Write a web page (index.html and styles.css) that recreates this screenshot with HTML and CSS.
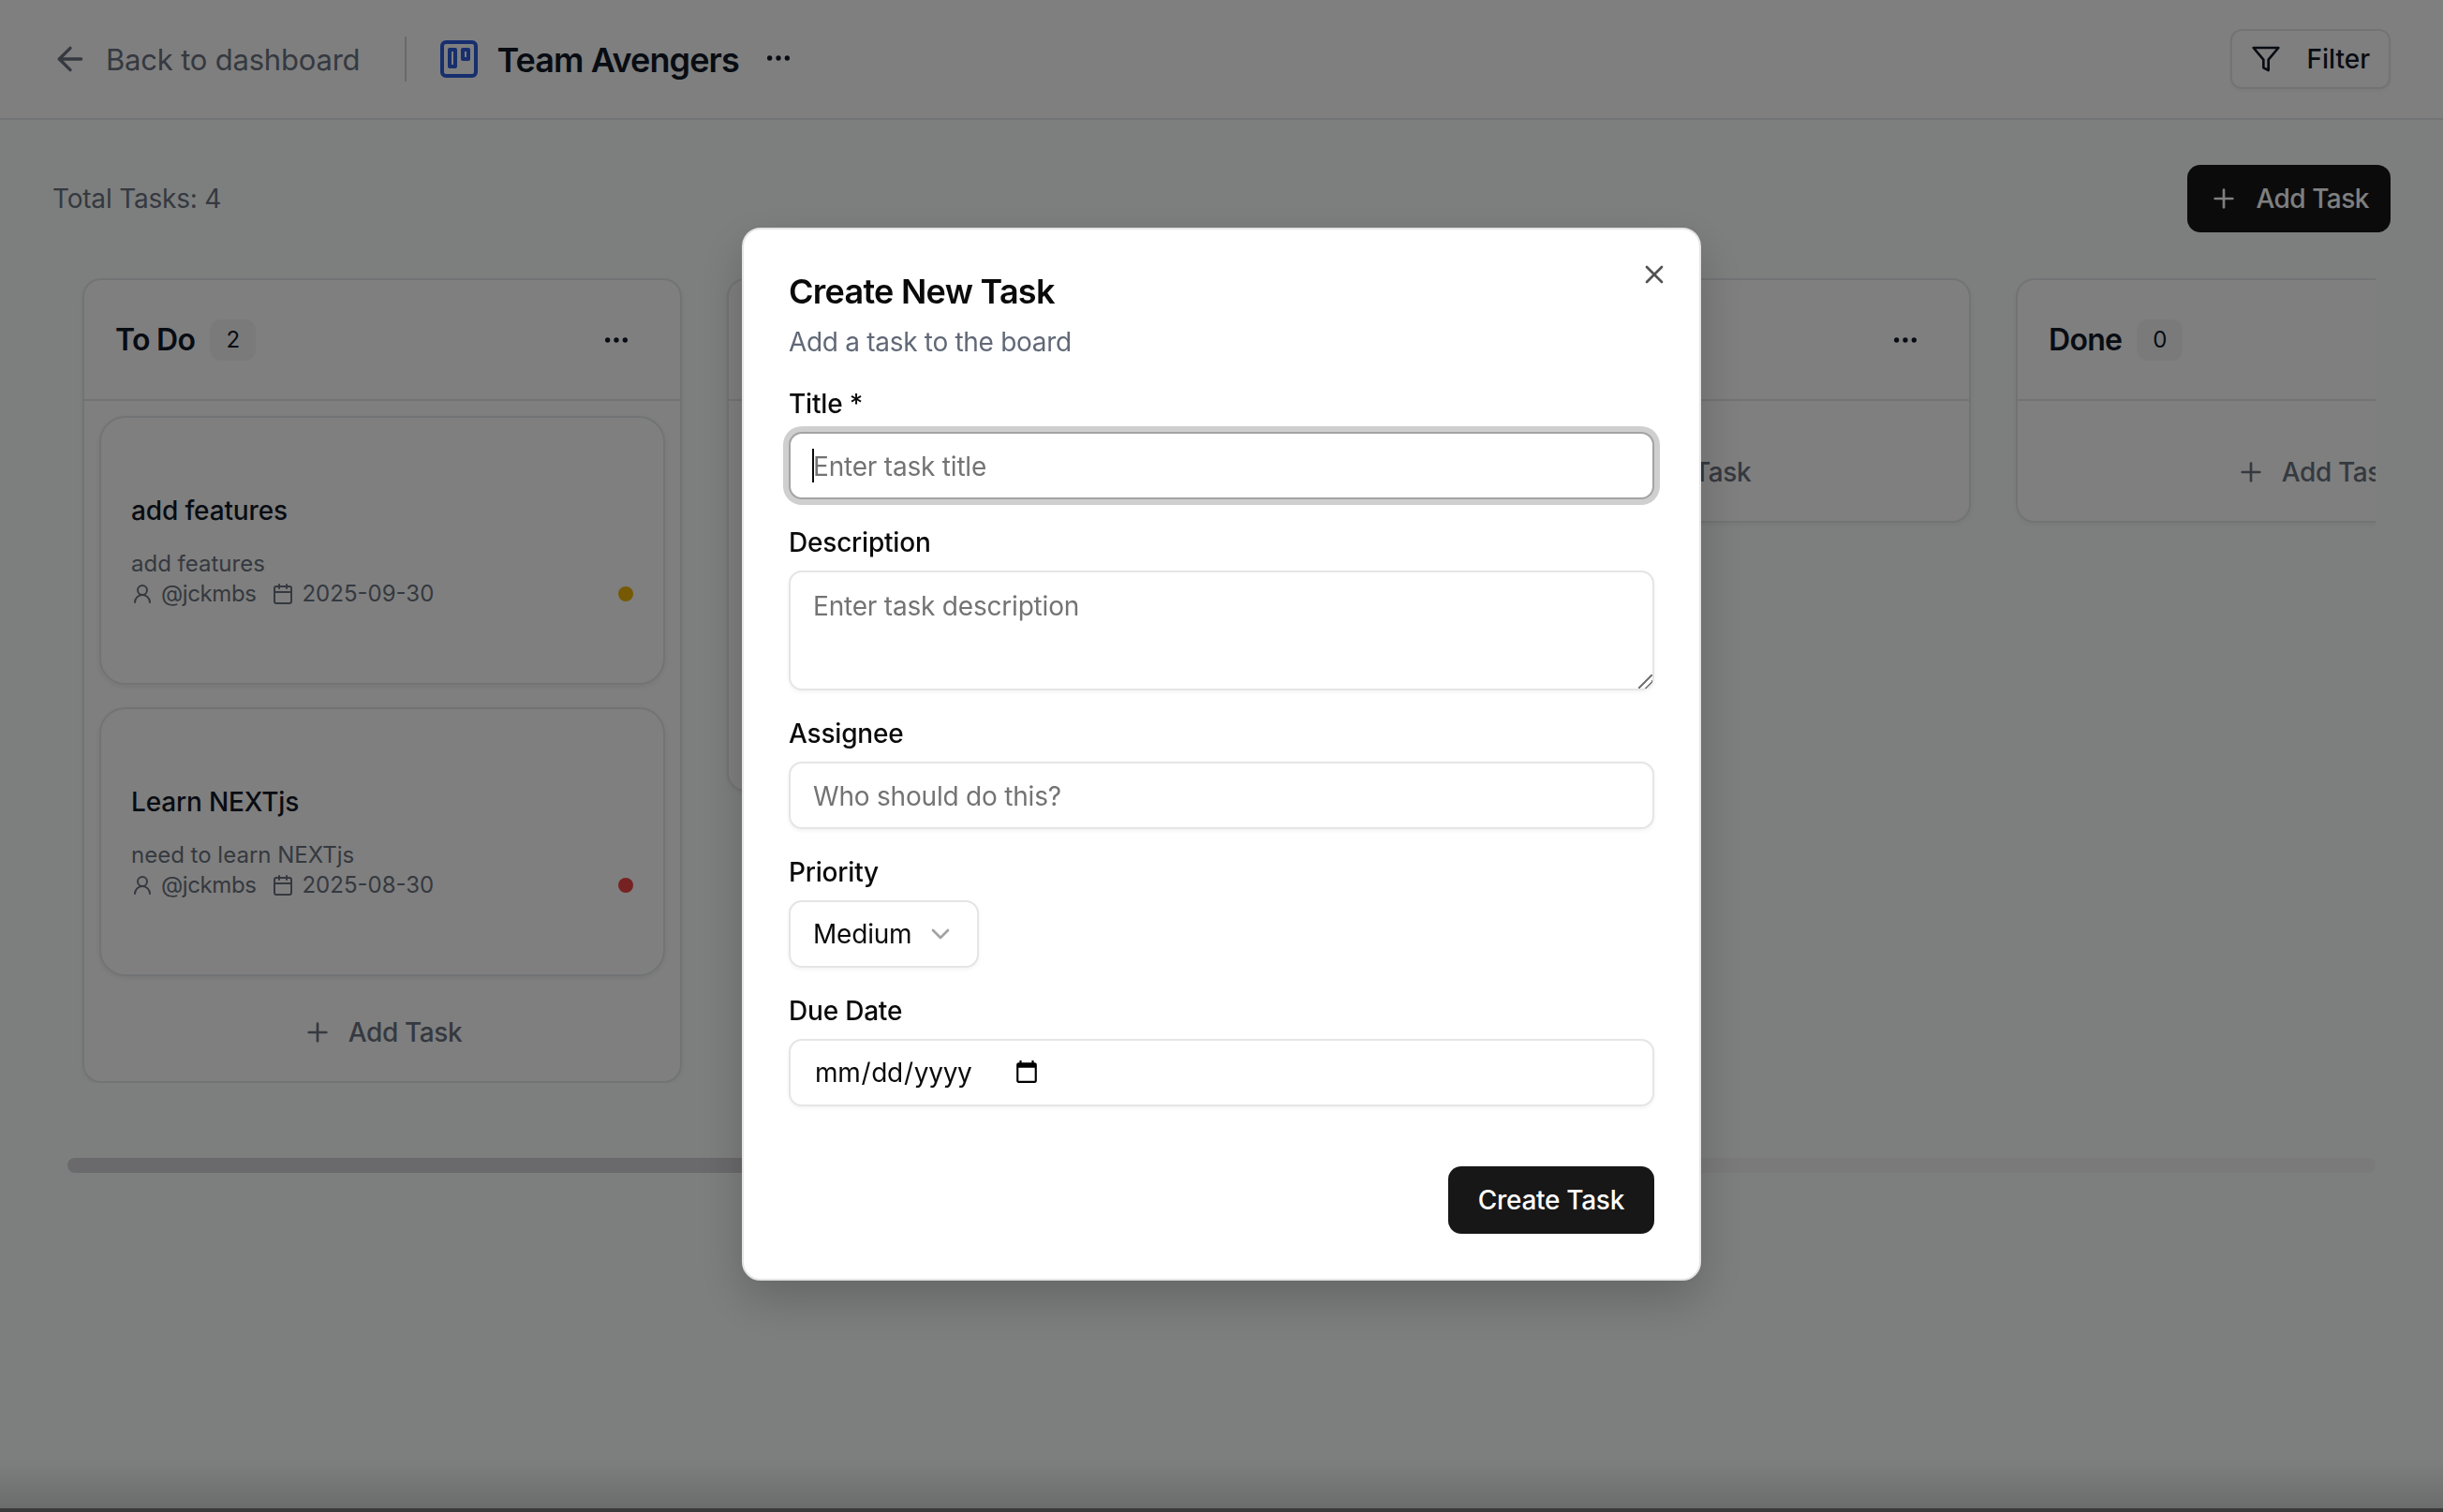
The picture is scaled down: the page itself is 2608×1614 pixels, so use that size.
FILE: index.html
```html
<!DOCTYPE html>
<html lang="en">
<head>
    <meta charset="UTF-8">
    <meta name="viewport" content="width=device-width, initial-scale=1.0">
    <title>Team Avengers</title>
    <link rel="stylesheet" href="styles.css">
</head>
<body>
    <header class="topbar">
        <div class="topbar-left">
            <a class="back-link" href="#">
                <svg class="icon icon-back" viewBox="0 0 24 24"><path d="m12 19-7-7 7-7"/><path d="M19 12H5"/></svg>
                Back to dashboard
            </a>
            <span class="divider"></span>
            <svg class="board-icon" viewBox="0 0 24 24"><rect x="3" y="3" width="18" height="18" rx="2"/><rect x="7" y="7" width="3" height="9"/><rect x="14" y="7" width="3" height="5"/></svg>
            <h1 class="board-name">Team Avengers</h1>
            <svg class="icon dots" viewBox="0 0 24 24"><circle cx="12" cy="12" r="1"/><circle cx="19" cy="12" r="1"/><circle cx="5" cy="12" r="1"/></svg>
        </div>
        <button class="btn-filter">
            <svg class="icon" viewBox="0 0 24 24"><path d="M22 3H2l8 9.46V19l4 2v-8.54L22 3z"/></svg>
            Filter
        </button>
    </header>

    <main class="content">
        <div class="toolbar">
            <span class="total">Total Tasks: 4</span>
            <button class="btn-dark btn-add">
                <svg class="icon" viewBox="0 0 24 24"><path d="M5 12h14"/><path d="M12 5v14"/></svg>
                Add Task
            </button>
        </div>

        <div class="board">
            <section class="column">
                <div class="column-head">
                    <h2>To Do</h2>
                    <span class="count">2</span>
                    <svg class="icon dots" viewBox="0 0 24 24"><circle cx="12" cy="12" r="1"/><circle cx="19" cy="12" r="1"/><circle cx="5" cy="12" r="1"/></svg>
                </div>
                <div class="column-body">
                    <article class="card">
                        <h3>add features</h3>
                        <p>add features</p>
                        <div class="meta">
                            <svg class="icon" viewBox="0 0 24 24"><circle cx="12" cy="8" r="5"/><path d="M20 21a8 8 0 0 0-16 0"/></svg>
                            <span class="who">@jckmbs</span>
                            <svg class="icon" viewBox="0 0 24 24"><path d="M8 2v4"/><path d="M16 2v4"/><rect x="3" y="4" width="18" height="18" rx="2"/><path d="M3 10h18"/></svg>
                            <span>2025-09-30</span>
                            <i class="dot dot-medium"></i>
                        </div>
                    </article>
                    <article class="card">
                        <h3>Learn NEXTjs</h3>
                        <p>need to learn NEXTjs</p>
                        <div class="meta">
                            <svg class="icon" viewBox="0 0 24 24"><circle cx="12" cy="8" r="5"/><path d="M20 21a8 8 0 0 0-16 0"/></svg>
                            <span class="who">@jckmbs</span>
                            <svg class="icon" viewBox="0 0 24 24"><path d="M8 2v4"/><path d="M16 2v4"/><rect x="3" y="4" width="18" height="18" rx="2"/><path d="M3 10h18"/></svg>
                            <span>2025-08-30</span>
                            <i class="dot dot-high"></i>
                        </div>
                    </article>
                    <button class="btn-ghost">
                        <svg class="icon" viewBox="0 0 24 24"><path d="M5 12h14"/><path d="M12 5v14"/></svg>
                        Add Task
                    </button>
                </div>
            </section>

            <section class="column">
                <div class="column-head">
                    <span class="count count-blank"></span>
                    <svg class="icon dots" viewBox="0 0 24 24"><circle cx="12" cy="12" r="1"/><circle cx="19" cy="12" r="1"/><circle cx="5" cy="12" r="1"/></svg>
                </div>
                <div class="column-body">
                    <article class="card card-blank"></article>
                    <button class="btn-ghost">
                        <svg class="icon" viewBox="0 0 24 24"><path d="M5 12h14"/><path d="M12 5v14"/></svg>
                    </button>
                </div>
            </section>

            <section class="column">
                <div class="column-head">
                    <span class="count count-blank"></span>
                    <svg class="icon dots" viewBox="0 0 24 24"><circle cx="12" cy="12" r="1"/><circle cx="19" cy="12" r="1"/><circle cx="5" cy="12" r="1"/></svg>
                </div>
                <div class="column-body">
                    <button class="btn-ghost">
                        <svg class="icon" viewBox="0 0 24 24"><path d="M5 12h14"/><path d="M12 5v14"/></svg>
                        Add Task
                    </button>
                </div>
            </section>

            <section class="column">
                <div class="column-head">
                    <h2>Done</h2>
                    <span class="count">0</span>
                    <svg class="icon dots" viewBox="0 0 24 24"><circle cx="12" cy="12" r="1"/><circle cx="19" cy="12" r="1"/><circle cx="5" cy="12" r="1"/></svg>
                </div>
                <div class="column-body">
                    <button class="btn-ghost">
                        <svg class="icon" viewBox="0 0 24 24"><path d="M5 12h14"/><path d="M12 5v14"/></svg>
                        Add Task
                    </button>
                </div>
            </section>
        </div>

        <div class="scroll-track"><div class="scroll-thumb"></div></div>
    </main>

    <div class="overlay">
        <div class="window-edge"></div>
        <form class="modal">
            <svg class="icon modal-close" viewBox="0 0 24 24"><path d="M18 6 6 18"/><path d="m6 6 12 12"/></svg>
            <div class="modal-head">
                <h2>Create New Task</h2>
                <p>Add a task to the board</p>
            </div>
            <div class="field">
                <label>Title *</label>
                <div class="caret-wrap">
                    <input class="input input-text input-focus" type="text" placeholder="Enter task title">
                    <span class="caret"></span>
                </div>
            </div>
            <div class="field">
                <label>Description</label>
                <textarea class="input textarea" placeholder="Enter task description"></textarea>
            </div>
            <div class="field">
                <label>Assignee</label>
                <input class="input input-text" type="text" placeholder="Who should do this?">
            </div>
            <div class="field">
                <label>Priority</label>
                <button type="button" class="input select">
                    Medium
                    <svg class="icon" viewBox="0 0 24 24"><path d="m6 9 6 6 6-6"/></svg>
                </button>
            </div>
            <div class="field">
                <label>Due Date</label>
                <input class="input date" type="date">
            </div>
            <div class="modal-foot">
                <button type="button" class="btn-dark btn-create">Create Task</button>
            </div>
        </form>
    </div>
</body>
</html>
```

FILE: styles.css
```css
* { box-sizing: border-box; }
html, body { height: 100%; }
body { margin: 0; background: #fbfefd; color: #111827; font-family: Inter, "Liberation Sans", sans-serif; font-size: 28px; overflow: hidden; }
h1, h2, h3, p { margin: 0; }
button { font: inherit; cursor: pointer; }

.icon { width: 32px; height: 32px; flex: none; fill: none; stroke: currentColor; stroke-width: 2; stroke-linecap: round; stroke-linejoin: round; }
.dots { fill: currentColor; }

/* top bar */
.topbar { height: 128px; padding: 0 56px 0 55px; display: flex; align-items: center; justify-content: space-between; background: #fff; border-bottom: 2px solid #e5e7eb; }
.topbar-left { display: flex; align-items: center; }
.back-link { display: flex; align-items: center; gap: 18px; color: #6b7280; text-decoration: none; font-size: 31px; letter-spacing: -.2px; }
.icon-back { width: 40px; height: 40px; }
.divider { width: 2px; height: 48px; margin: 0 32px 0 48px; background: #d1d5db; }
.board-icon { width: 48px; height: 48px; flex: none; fill: none; stroke: #2f5fdc; stroke-width: 2; stroke-linejoin: round; }
.board-name { margin: 2px 26px 0 16px; font-size: 36px; font-weight: 600; letter-spacing: -.9px; }
.topbar-left .dots { margin-top: -2px; }
.btn-filter { height: 64px; padding: 0 20px; display: flex; align-items: center; gap: 27px; color: #111827; background: #fff; border: 2px solid #e5e7eb; border-radius: 12px; font-weight: 500; box-shadow: 0 2px 4px rgba(0,0,0,.05); }

/* board */
.content { padding: 48px 0 0 72px; }
.toolbar { display: flex; align-items: center; justify-content: space-between; height: 72px; margin: 0 56px 0 -16px; }
.total { color: #6b7280; letter-spacing: -.2px; }
.btn-dark { height: 72px; display: flex; align-items: center; background: #171717; color: #fff; border: 0; border-radius: 14px; font-weight: 500; letter-spacing: -.5px; }
.btn-add { padding: 0 23px; gap: 18px; }

.board { width: 2464px; margin-top: 49px; padding: 0 16px; display: flex; align-items: flex-start; gap: 48px; overflow: hidden; }
.column { flex: 0 0 640px; background: #fff; border: 2px solid #e5e7eb; border-radius: 20px; box-shadow: 0 2px 6px rgba(0,0,0,.06); }
.column-head { height: 129px; padding: 0 52px 0 33px; display: flex; align-items: center; gap: 16px; border-bottom: 2px solid #e5e7eb; }
.column-head h2 { font-size: 32px; font-weight: 600; letter-spacing: -.7px; }
.column-head .dots { margin-left: auto; }
.count { width: 49px; height: 44px; display: flex; align-items: center; justify-content: center; background: #f4f4f5; border-radius: 12px; font-size: 24px; }
.column-body { padding: 16px; display: flex; flex-direction: column; }

.card { height: 287px; margin-bottom: 24px; padding: 75px 32px 0; background: #fff; border: 2px solid #e5e7eb; border-radius: 28px; box-shadow: 0 2px 6px rgba(0,0,0,.08); }
.card:last-of-type { margin-bottom: 0; }
.card h3 { font-size: 28px; line-height: 48px; font-weight: 500; letter-spacing: -.15px; }
.card p { margin-top: 17px; font-size: 24px; line-height: 32px; color: #6b7280; }
.meta { display: flex; align-items: center; font-size: 24px; line-height: 32px; color: #6b7280; }
.meta .icon { width: 24px; height: 24px; margin-right: 8px; }
.who { margin-right: 17px; letter-spacing: -.4px; }
.dot { width: 16px; height: 16px; margin-left: auto; border-radius: 50%; }
.dot-medium { background: #eab308; }
.dot-high { background: #ef4444; }

.btn-ghost { height: 72px; margin-top: 24px; display: flex; align-items: center; justify-content: center; gap: 17px; background: none; border: 0; color: #6b7280; font-weight: 500; letter-spacing: -.4px; }

.scroll-track { width: 2464px; height: 16px; margin-top: 80px; background: #f4f4f5; border-radius: 8px; }
.scroll-thumb { width: 1500px; height: 100%; background: #d4d4d8; border-radius: 8px; }

/* modal */
.overlay { position: fixed; inset: 0; display: flex; align-items: center; justify-content: center; padding-bottom: 5px; background: rgba(0,0,0,.5); }
.window-edge { position: absolute; left: 0; right: 0; bottom: 0; height: 54px; background: linear-gradient(rgba(0,0,0,0), rgba(0,0,0,.14) 92%, #3a3a3a 92%); }
.modal { position: relative; width: 1024px; padding: 48px; display: flex; flex-direction: column; gap: 32px; background: #fff; border: 2px solid #e5e5e5; border-radius: 20px; box-shadow: 0 20px 50px rgba(0,0,0,.2); }
.modal-close { position: absolute; top: 32px; right: 32px; color: #525252; }
.modal-head h2 { font-size: 36px; line-height: 36px; font-weight: 600; color: #0a0a0a; letter-spacing: -.72px; }
.modal-head p { margin-top: 16px; line-height: 40px; color: #616877; letter-spacing: -.3px; }
.field { display: flex; flex-direction: column; gap: 16px; align-items: flex-start; }
.field label { line-height: 28px; font-weight: 500; color: #0a0a0a; letter-spacing: -.2px; }
.caret-wrap { position: relative; width: 100%; }
.input { display: block; width: 100%; height: 72px; padding: 0 24px; background: #fff; border: 2px solid #e5e5e5; border-radius: 14px; font: inherit; letter-spacing: -.2px; color: #0a0a0a; outline: 0; box-shadow: 0 2px 4px rgba(0,0,0,.05); }
.input::placeholder { color: #737373; }
.input-text { padding-top: 2px; }
.input-focus { border-color: #a3a3a3; box-shadow: 0 0 0 6px #cfcfcf; }
.caret { position: absolute; left: 25px; top: 18px; width: 2px; height: 36px; background: #0a0a0a; }
.textarea { height: 128px; padding: 19px 24px; }
.textarea::-webkit-resizer { background: linear-gradient(135deg, transparent 46%, #777 46% 54%, transparent 54% 70%, #777 70% 78%, transparent 78%); }
.select { width: auto; padding: 0 23px 0 24px; display: flex; align-items: center; gap: 15px; }
.select .icon { color: #a3a3a3; }
.date { padding-left: 25px; letter-spacing: -.3px; }
.date::-webkit-datetime-edit { flex: 0 0 auto; }
.date::-webkit-calendar-picker-indicator { margin-left: 4px; }
.modal-foot { display: flex; justify-content: flex-end; padding-top: 32px; }
.btn-create { padding: 0 32px; letter-spacing: -.3px; }
```
